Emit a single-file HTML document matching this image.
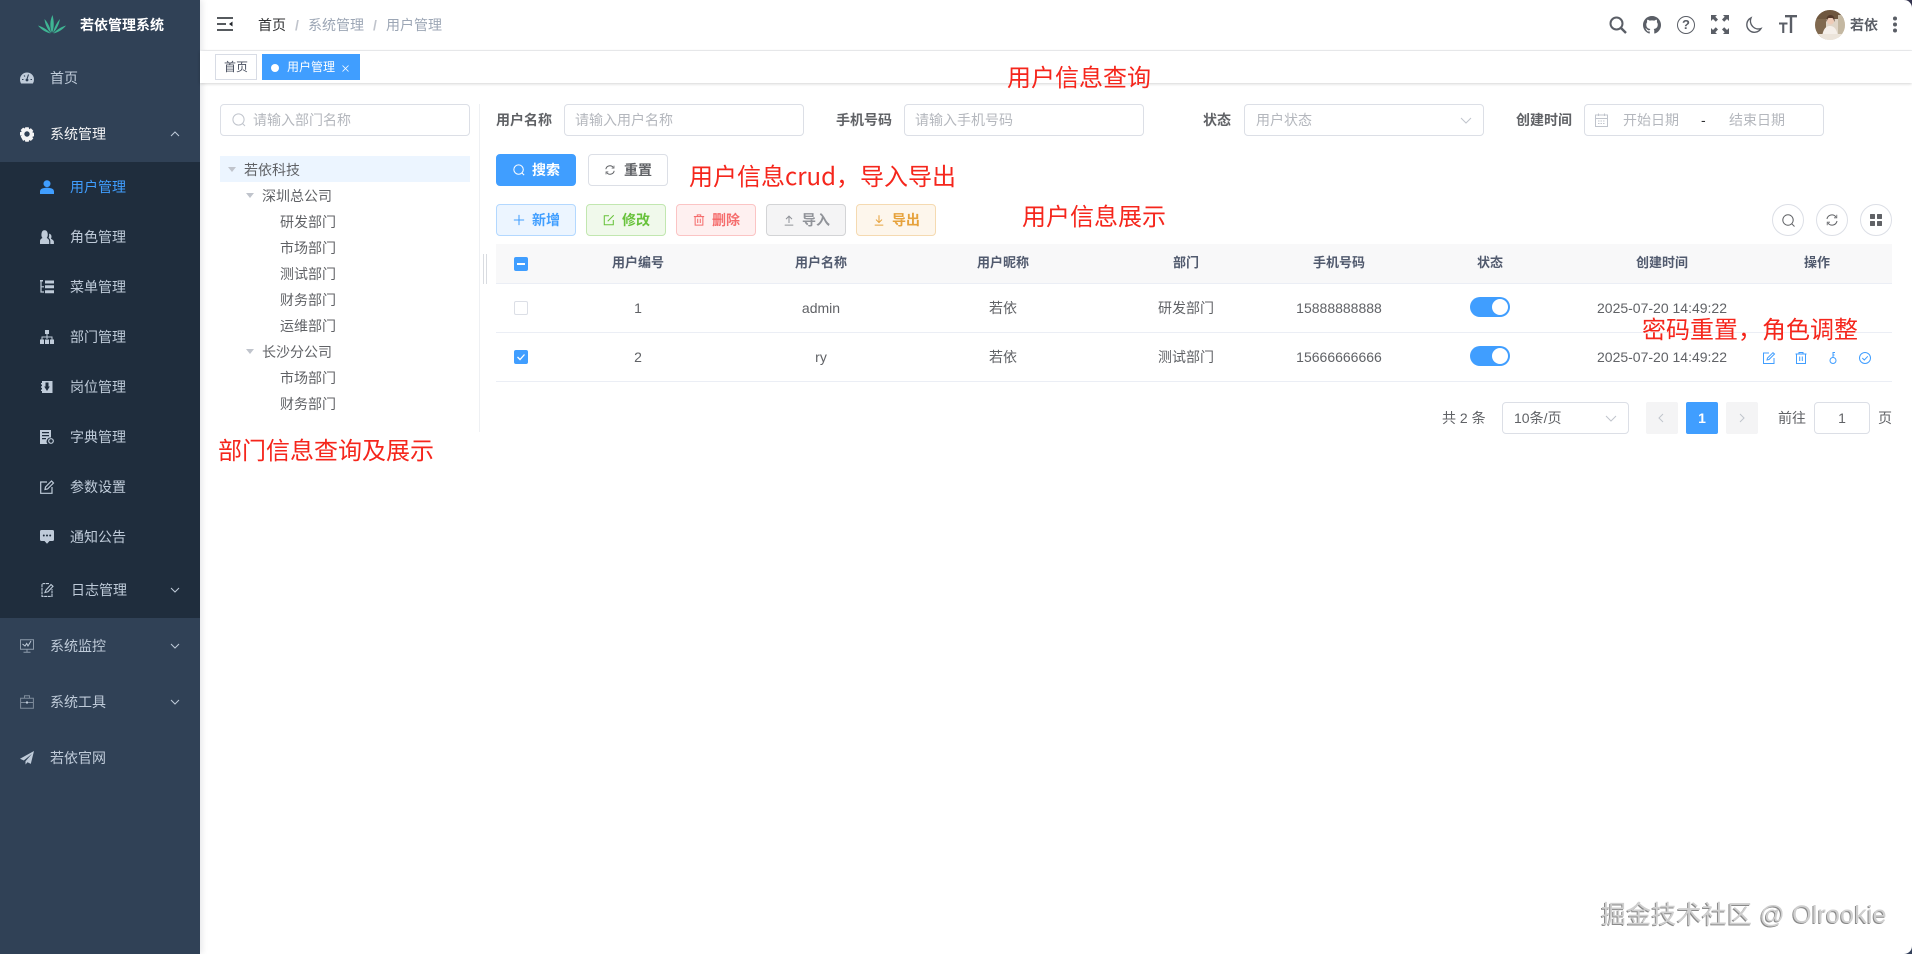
<!DOCTYPE html>
<html lang="zh-CN"><head><meta charset="utf-8"><title>用户管理</title>
<style>
*{box-sizing:border-box}
html,body{margin:0;padding:0;width:1912px;height:954px;overflow:hidden;background:#fff}
body{position:relative;font-family:"Liberation Sans","Noto Sans CJK SC",sans-serif;font-size:14px;color:#606266}
.a{position:absolute}
.t{position:absolute;white-space:nowrap;line-height:20px}
.c{position:absolute;white-space:nowrap;line-height:20px;transform:translateX(-50%)}
.b{font-weight:700}
.m{color:#bfcbd9}
svg{position:absolute;display:block;overflow:visible}
.inp{position:absolute;height:32px;border:1px solid #dcdfe6;border-radius:4px;background:#fff}
.ph{color:#b4b7bd}
.btn{position:absolute;width:80px;height:32px;border-radius:4px;border:1px solid;font-weight:700;line-height:30px}
.btn span{position:absolute;left:35px;top:0}
.btn svg{left:16px;top:9px}
.cir{position:absolute;width:32px;height:32px;border:1px solid #dcdfe6;border-radius:50%;top:204px}
.line{position:absolute;left:496px;width:1396px;height:1px;background:#ebeef5}
.red{position:absolute;white-space:nowrap;font-size:24px;line-height:32px;color:#f5261c;font-family:"Noto Sans CJK SC","Liberation Sans",sans-serif}
.sw{position:absolute;left:1470px;width:40px;height:20px;border-radius:10px;background:#409eff}
.sw i{position:absolute;right:2px;top:2px;width:16px;height:16px;border-radius:50%;background:#fff}
.pg{position:absolute;top:402px;width:32px;height:32px;border-radius:2px;background:#f4f4f5}
.tri{position:absolute;width:0;height:0;border-left:4px solid transparent;border-right:4px solid transparent;border-top:5px solid #c0c4cc}
</style></head><body>

<!-- Sidebar -->
<div class="a" style="left:0;top:0;width:200px;height:954px;background:#304156;box-shadow:2px 0 6px rgba(0,21,41,.1)"></div>
<div class="a" style="left:0;top:162px;width:200px;height:456px;background:#1f2d3d"></div>

<svg style="left:37px;top:14px" width="30" height="20" viewBox="0 0 30 20">
<g fill="#3fb594"><path d="M15 19C12.500 13 13 6 15.500 1 17 7 17.500 13 15 19Z"/><path d="M14 19C10 15 8 10 7.500 5 11 9 13.500 14 14 19Z"/><path d="M16 19C20 15 22 10 23 5 19.500 9 17 14 16 19Z"/><path d="M13.500 19.500C8 18 3.500 15 1 11.500 6 13 11 16 13.500 19.500Z"/><path d="M16.500 19.500C22 18 26.500 15 29 11.500 24 13 19 16 16.500 19.500Z"/></g></svg>
<div class="t b" style="left:80px;top:15px;color:#fff">若依管理系统</div>

<!-- 首页 -->
<svg style="left:20px;top:71px" width="14" height="14" viewBox="0 0 14 14"><path fill="#bfcbd9" d="M7 1.500A7 7 0 0 0 0 8.500c0 1.500.4 2.900 1.100 4h11.800A7 7 0 0 0 14 8.500a7 7 0 0 0-7-7Z"/><circle cx="7" cy="9" r="1.400" fill="#304156"/><path stroke="#304156" stroke-width="1.100" d="M7 8 8.500 3.500M2 8.500h1.500M10.500 8.500H12M4 4.500l1 1"/></svg>
<div class="t m" style="left:50px;top:68px">首页</div>

<!-- 系统管理 -->
<svg style="left:20px;top:127px" width="14" height="14" viewBox="0 0 14 14"><path fill="#f4f4f5" fill-rule="evenodd" d="M5.300.3h3.400l.5 1.900 1.700-.9 2.400 2.400-1 1.600 1.700.6v3.400l-1.700.6 1 1.600-2.400 2.400-1.700-.9-.5 1.700H5.300l-.5-1.700-1.700.9L.7 9.500l1-1.600L0 8.700V5.300l1.700-.7-1-1.600 2.400-2.400 1.700.9ZM7 4.300a2.700 2.700 0 1 0 0 5.400 2.700 2.700 0 0 0 0-5.400Z"/></svg>
<div class="t" style="left:50px;top:124px;color:#f4f4f5">系统管理</div>
<svg style="left:170px;top:131px" width="10" height="6" viewBox="0 0 10 6"><path d="M1 5 5 1l4 4" fill="none" stroke="#bfcbd9"/></svg>

<!-- sub items -->
<svg style="left:40px;top:180px" width="14" height="14" viewBox="0 0 14 14"><circle cx="7" cy="3.700" r="3.500" fill="#409eff"/><path fill="#409eff" d="M0 14v-2.500C0 9 3 7.800 7 7.800s7 1.200 7 3.700V14Z"/></svg>
<div class="t" style="left:70px;top:177px;color:#409eff">用户管理</div>

<svg style="left:40px;top:230px" width="14" height="14" viewBox="0 0 14 14"><g fill="#bfcbd9"><path d="M0 14v-2.500c0-2 1.200-3 2.500-3.500C1.500 6.800 1.200 5.500 1.500 3.500 2 1 3 .3 4.500.3S7.300 1 7.700 3.500c.3 2-.1 3.300-1 4.500C8 8.500 9.200 9.500 9.200 11.500V14Z"/><path d="M10.300 14v-3c0-1.300-.8-2.500-1.700-3.200.5-1 .7-2.500.4-4 1.500 0 2.500 1.200 2.500 3 0 .7-.2 1.300-.6 2 1.300.6 3 1.700 3 3V14Z"/></g></svg>
<div class="t m" style="left:70px;top:227px">角色管理</div>

<svg style="left:40px;top:280px" width="14" height="14" viewBox="0 0 14 14"><g fill="#bfcbd9"><path d="M0 0h3v1.500H0ZM5 .5h9v3H5ZM5 5.300h9v3H5ZM5 10.300h9v3H5Z"/></g><path d="M1 1.500V12h3M1 6.800h3" fill="none" stroke="#bfcbd9" stroke-width="1.200"/></svg>
<div class="t m" style="left:70px;top:277px">菜单管理</div>

<svg style="left:40px;top:330px" width="14" height="14" viewBox="0 0 14 14"><g fill="#bfcbd9"><path d="M5 0h4v4H5ZM0 9.500h4V14H0ZM5 9.500h4V14H5ZM10 9.500h4V14h-4Z"/></g><path d="M7 4v5M2 9.500V7h10v2.500" fill="none" stroke="#bfcbd9"/></svg>
<div class="t m" style="left:70px;top:327px">部门管理</div>

<svg style="left:41px;top:380px" width="12" height="14" viewBox="0 0 12 14"><path fill="#bfcbd9" fill-rule="evenodd" d="M1 1h10.500v12H1ZM4.500 2.500h3v4h1.300L6 11 3.200 6.500h1.300Z"/><path fill="#bfcbd9" d="M0 3h1v1.500H0ZM0 6.300h1v1.500H0ZM0 9.500h1V11H0Z"/></svg>
<div class="t m" style="left:70px;top:377px">岗位管理</div>

<svg style="left:40px;top:430px" width="14" height="14" viewBox="0 0 14 14"><path fill="#bfcbd9" fill-rule="evenodd" d="M0 0h11v7.500A4 4 0 0 0 7.500 14H0ZM2 2v1.200h7V2Zm0 3v1.200h7V5Zm0 3v1.200h4V8Z"/><circle cx="11" cy="11" r="2.300" fill="none" stroke="#bfcbd9" stroke-width="1.200"/></svg>
<div class="t m" style="left:70px;top:427px">字典管理</div>

<svg style="left:40px;top:480px" width="14" height="14" viewBox="0 0 14 14"><path d="M7 2H.7v11.300H12V7" fill="none" stroke="#bfcbd9" stroke-width="1.200"/><path d="M5 9.500 5.500 7l6-6L13.500 3l-6 6Z" fill="none" stroke="#bfcbd9" stroke-width="1.200"/></svg>
<div class="t m" style="left:70px;top:477px">参数设置</div>

<svg style="left:40px;top:530px" width="14" height="14" viewBox="0 0 14 14"><path fill="#bfcbd9" d="M1.500 0h11A1.500 1.500 0 0 1 14 1.500v8a1.500 1.500 0 0 1-1.500 1.500H9.500L7 13.800 4.500 11h-3A1.500 1.500 0 0 1 0 9.500v-8A1.500 1.500 0 0 1 1.500 0Z"/><g fill="#1f2d3d"><circle cx="3.800" cy="5.500" r="1"/><circle cx="7" cy="5.500" r="1"/><circle cx="10.200" cy="5.500" r="1"/></g></svg>
<div class="t m" style="left:70px;top:527px">通知公告</div>

<svg style="left:41px;top:583px" width="13" height="14" viewBox="0 0 13 14"><path d="M8 .6H2.500L1 1v12.400h10V6" fill="none" stroke="#bfcbd9" stroke-width="1.100" stroke-dasharray="3 .6"/><path d="M4 9.500 5 7l5-5.500 2 1.800L7 8.800Z" fill="none" stroke="#bfcbd9" stroke-width="1.100"/></svg>
<div class="t m" style="left:71px;top:580px">日志管理</div>
<svg style="left:170px;top:587px" width="10" height="6" viewBox="0 0 10 6"><path d="M1 1l4 4 4-4" fill="none" stroke="#bfcbd9"/></svg>

<!-- 系统监控 -->
<svg style="left:20px;top:639px" width="14" height="14" viewBox="0 0 14 14"><path d="M.5.800h13v9.400H.5ZM7 10.200v3M3.500 13.300h7" fill="none" stroke="#8e9cac"/><path d="M2.500 5 5 7l1.700-2.500L8 7l3-5" fill="none" stroke="#bfcbd9"/></svg>
<div class="t m" style="left:50px;top:636px">系统监控</div>
<svg style="left:170px;top:643px" width="10" height="6" viewBox="0 0 10 6"><path d="M1 1l4 4 4-4" fill="none" stroke="#bfcbd9"/></svg>

<!-- 系统工具 -->
<svg style="left:20px;top:695px" width="14" height="14" viewBox="0 0 14 14"><path d="M.6 3.300h12.800v10H.6ZM4.500 3.300V.8h5v2.500M.6 7.500h12.800" fill="none" stroke="#7e8c9c"/><path d="M6 6.500h2v2H6Z" fill="#bfcbd9"/></svg>
<div class="t m" style="left:50px;top:692px">系统工具</div>
<svg style="left:170px;top:699px" width="10" height="6" viewBox="0 0 10 6"><path d="M1 1l4 4 4-4" fill="none" stroke="#bfcbd9"/></svg>

<!-- 若依官网 -->
<svg style="left:20px;top:751px" width="14" height="14" viewBox="0 0 14 14"><path fill="#bfcbd9" d="M14 0 0 7.800l3.800 1.700L12 2.800 5.500 10.300v3.200l2-2.300 3.300 1.700Z"/></svg>
<div class="t m" style="left:50px;top:748px">若依官网</div>

<!-- Navbar -->
<div class="a" style="left:200px;top:50px;width:1712px;height:1px;background:#f0f1f3"></div>
<svg style="left:217px;top:17px" width="16" height="14" viewBox="0 0 16 14"><path d="M0 1h16M0 7h9M0 13h16" stroke="#1f2329" stroke-width="1.500" fill="none"/><path d="M15.500 4.500v5L12 7Z" fill="#1f2329"/></svg>
<div class="t" style="left:258px;top:15px;color:#303133">首页</div>
<div class="t" style="left:295px;top:15px;color:#c0c4cc;font-weight:700">/</div>
<div class="t" style="left:308px;top:15px;color:#9ca6b5">系统管理</div>
<div class="t" style="left:373px;top:15px;color:#c0c4cc;font-weight:700">/</div>
<div class="t" style="left:386px;top:15px;color:#9ca6b5">用户管理</div>

<svg style="left:1609px;top:16px" width="18" height="18" viewBox="0 0 18 18"><circle cx="7.500" cy="7.500" r="6" fill="none" stroke="#5a5e66" stroke-width="2"/><path d="M12 12l5 5" stroke="#5a5e66" stroke-width="2.400"/></svg>
<svg style="left:1643px;top:16px" width="18" height="18" viewBox="0 0 16 16"><path fill="#5a5e66" d="M8 0C3.580 0 0 3.580 0 8c0 3.540 2.290 6.530 5.470 7.590.4.070.55-.17.55-.38 0-.19-.01-.82-.01-1.490-2.010.37-2.530-.49-2.690-.94-.09-.23-.48-.94-.82-1.130-.28-.15-.68-.52-.01-.53.630-.01 1.080.58 1.230.82.72 1.210 1.870.87 2.330.66.070-.52.280-.87.510-1.070-1.780-.2-3.640-.89-3.640-3.950 0-.87.310-1.590.82-2.150-.08-.2-.36-1.020.08-2.120 0 0 .67-.21 2.200.82.640-.18 1.320-.27 2-.27s1.360.09 2 .27c1.530-1.040 2.200-.82 2.200-.82.44 1.100.16 1.920.08 2.120.51.560.82 1.270.82 2.150 0 3.070-1.870 3.750-3.650 3.950.29.250.54.730.54 1.480 0 1.070-.01 1.930-.01 2.200 0 .21.150.46.550.38A8.010 8.010 0 0 0 16 8c0-4.420-3.580-8-8-8Z"/></svg>
<div class="a" style="left:1677px;top:16px;width:18px;height:18px;border:1.500px solid #5a5e66;border-radius:50%;text-align:center;font-size:13px;font-weight:700;line-height:15px;color:#5a5e66">?</div>
<svg style="left:1711px;top:15px" width="18" height="19" viewBox="0 0 18 19"><g fill="#5a5e66"><path d="M0 0h6L4.300 1.800 7 4.500 4.800 6.700 2 4 0 6ZM18 0h-6l1.700 1.800L11 4.500l2.200 2.200L16 4l2 2ZM0 19h6l-1.700-1.800L7 14.500l-2.200-2.200L2 15l-2-2ZM18 19h-6l1.700-1.800L11 14.500l2.200-2.200L16 15l2-2Z"/></g></svg>
<svg style="left:1745px;top:17px" width="17" height="17" viewBox="0 0 17 17"><path d="M6 .9A7.600 7.600 0 1 0 16 11.500 8 8 0 0 1 6 .9Z" fill="none" stroke="#5a5e66" stroke-width="1.400"/></svg>
<svg style="left:1779px;top:15px" width="18" height="19" viewBox="0 0 18 19"><path d="M6 0h12v2.400h-4.800V18h-2.400V2.400H6ZM0 7.500h8.500v2H5.300V18H3.200V9.500H0Z" fill="#5a5e66"/></svg>

<svg style="left:1815px;top:10px" width="30" height="30" viewBox="0 0 30 30">
<defs><clipPath id="cp"><circle cx="15" cy="15" r="15"/></clipPath></defs>
<g clip-path="url(#cp)"><rect width="30" height="30" fill="#e0d6c8"/><rect width="11" height="30" fill="#80694f"/><rect x="0" y="0" width="30" height="9" fill="#6f573f"/><rect x="23" y="5" width="7" height="25" fill="#c4b8a2"/><path d="M7 30c0-9 3-14 8-14s8 5 8 14Z" fill="#f5efe9"/><circle cx="15.500" cy="11" r="3.500" fill="#eeccb8"/><path d="M11.500 12c-.5-5 1.500-7 4-7s4.500 2 4 7l-1.500-4h-5Z" fill="#54392a"/><rect y="24" width="30" height="6" fill="#ece4da"/></g></svg>
<div class="t b" style="left:1850px;top:15px;color:#5a5e66">若依</div>
<svg style="left:1892px;top:16px" width="6" height="17" viewBox="0 0 6 17"><g fill="#5a5e66"><circle cx="3" cy="2.500" r="2"/><circle cx="3" cy="8.500" r="2"/><circle cx="3" cy="14.500" r="2"/></g></svg>

<!-- Tags -->
<div class="a" style="left:200px;top:51px;width:1712px;height:32px;background:#fff;box-shadow:0 1px 3px 0 rgba(0,0,0,.15),0 0 3px 0 rgba(0,0,0,.04)"></div>
<div class="a" style="left:215px;top:54px;width:42px;height:26px;border:1px solid #d8dce5;background:#fff;color:#495060;font-size:12px;line-height:24px;text-align:center">首页</div>
<div class="a" style="left:262px;top:54px;width:98px;height:26px;background:#409eff"></div>
<div class="a" style="left:271px;top:64px;width:8px;height:8px;border-radius:50%;background:#fff"></div>
<div class="t" style="left:287px;top:57px;color:#fff;font-size:12px">用户管理</div>
<svg style="left:342px;top:65px" width="7" height="7" viewBox="0 0 7 7"><path d="M.5.500l6 6M6.500.500l-6 6" stroke="#fff" stroke-width=".8"/></svg>

<!-- Left tree -->
<div class="a" style="left:479px;top:104px;width:1px;height:328px;background:#eef0f3"></div>
<div class="a" style="left:483px;top:254px;width:1px;height:30px;background:#d9dce1"></div>
<div class="a" style="left:486px;top:254px;width:1px;height:30px;background:#d9dce1"></div>
<div class="inp" style="left:220px;top:104px;width:250px"></div>
<svg style="left:232px;top:113px" width="14" height="14" viewBox="0 0 14 14"><circle cx="6.500" cy="6.500" r="5.600" fill="none" stroke="#c0c4cc"/><path d="M10.500 10.500l2.500 2.500" stroke="#c0c4cc"/></svg>
<div class="t ph" style="left:253px;top:110px">请输入部门名称</div>

<div class="a" style="left:220px;top:156px;width:250px;height:26px;background:#ecf5ff"></div>
<div class="tri" style="left:228px;top:167px"></div>
<div class="t" style="left:244px;top:160px">若依科技</div>
<div class="tri" style="left:246px;top:193px"></div>
<div class="t" style="left:262px;top:186px">深圳总公司</div>
<div class="t" style="left:280px;top:212px">研发部门</div>
<div class="t" style="left:280px;top:238px">市场部门</div>
<div class="t" style="left:280px;top:264px">测试部门</div>
<div class="t" style="left:280px;top:290px">财务部门</div>
<div class="t" style="left:280px;top:316px">运维部门</div>
<div class="tri" style="left:246px;top:349px"></div>
<div class="t" style="left:262px;top:342px">长沙分公司</div>
<div class="t" style="left:280px;top:368px">市场部门</div>
<div class="t" style="left:280px;top:394px">财务部门</div>

<!-- Form -->
<div class="t b" style="left:496px;top:110px">用户名称</div>
<div class="inp" style="left:564px;top:104px;width:240px"></div>
<div class="t ph" style="left:575px;top:110px">请输入用户名称</div>
<div class="t b" style="left:836px;top:110px">手机号码</div>
<div class="inp" style="left:904px;top:104px;width:240px"></div>
<div class="t ph" style="left:915px;top:110px">请输入手机号码</div>
<div class="t b" style="left:1203px;top:110px">状态</div>
<div class="inp" style="left:1244px;top:104px;width:240px"></div>
<div class="t ph" style="left:1256px;top:110px">用户状态</div>
<svg style="left:1460px;top:117px" width="12" height="7" viewBox="0 0 12 7"><path d="M1 1l5 5 5-5" fill="none" stroke="#c0c4cc"/></svg>
<div class="t b" style="left:1516px;top:110px">创建时间</div>
<div class="inp" style="left:1584px;top:104px;width:240px"></div>
<svg style="left:1595px;top:113px" width="13" height="14" viewBox="0 0 13 14"><path d="M.5 2h12v11.500H.5ZM.5 5.500h12M3.500 .5V3M9.500 .5V3" fill="none" stroke="#c0c4cc"/><path d="M3 8h7M3 10.500h7" stroke="#c0c4cc" stroke-dasharray="1.500 1"/></svg>
<div class="t ph" style="left:1623px;top:110px">开始日期</div>
<div class="t" style="left:1701px;top:110px;color:#303133">-</div>
<div class="t ph" style="left:1729px;top:110px">结束日期</div>

<!-- search buttons -->
<div class="btn" style="left:496px;top:154px;background:#409eff;border-color:#409eff;color:#fff"><svg width="12" height="12" viewBox="0 0 14 14"><circle cx="6.500" cy="6.500" r="5.500" fill="none" stroke="#fff" stroke-width="1.200"/><path d="M10.500 10.500 13 13" stroke="#fff" stroke-width="1.200"/></svg><span>搜索</span></div>
<div class="btn" style="left:588px;top:154px;background:#fff;border-color:#dcdfe6;color:#606266"><svg style="left:16px;top:10px" width="10" height="10" viewBox="0 0 12 12"><path d="M1 5A5 5 0 0 1 10 3M11 7a5 5 0 0 1-9 2" fill="none" stroke="#606266" stroke-width="1.200"/><path d="M10.800.8v3H8M1.200 11.200v-3H4" fill="none" stroke="#606266" stroke-width=".9"/></svg><span>重置</span></div>

<!-- toolbar -->
<div class="btn" style="left:496px;top:204px;background:#ecf5ff;border-color:#b3d8ff;color:#409eff"><svg width="12" height="12" viewBox="0 0 14 14"><path d="M7 1v12M1 7h12" stroke="#409eff" stroke-width="1.200"/></svg><span>新增</span></div>
<div class="btn" style="left:586px;top:204px;background:#f0f9eb;border-color:#c2e7b0;color:#67c23a"><svg width="12" height="12" viewBox="0 0 14 14"><path d="M7 2H1.500v10.500H12V7M5.500 8.500 12.500 1.500" fill="none" stroke="#67c23a" stroke-width="1.200"/></svg><span>修改</span></div>
<div class="btn" style="left:676px;top:204px;background:#fef0f0;border-color:#fbc4c4;color:#f56c6c"><svg width="12" height="12" viewBox="0 0 14 14"><path d="M1 3h12M2.500 3v10h9V3M5 3V1h4v2M5.500 5.500v5M8.500 5.500v5" fill="none" stroke="#f56c6c" stroke-width="1.200"/></svg><span>删除</span></div>
<div class="btn" style="left:766px;top:204px;background:#f4f4f5;border-color:#d3d4d6;color:#909399"><svg width="12" height="12" viewBox="0 0 14 14"><path d="M2 13h10M7 10.500V2.500M3.500 6 7 2.500 10.500 6" fill="none" stroke="#909399" stroke-width="1.200"/></svg><span>导入</span></div>
<div class="btn" style="left:856px;top:204px;background:#fdf6ec;border-color:#f5dab1;color:#e6a23c"><svg width="12" height="12" viewBox="0 0 14 14"><path d="M2 13h10M7 1.500v8.500M3.500 6.500 7 10l3.500-3.500" fill="none" stroke="#e6a23c" stroke-width="1.200"/></svg><span>导出</span></div>

<div class="cir" style="left:1772px"></div>
<svg style="left:1782px;top:214px" width="13" height="13" viewBox="0 0 13 13"><circle cx="6" cy="6" r="5.200" fill="none" stroke="#606266"/><path d="M9.800 9.800 12.500 12.500" stroke="#606266"/></svg>
<div class="cir" style="left:1816px"></div>
<svg style="left:1826px;top:214px" width="12" height="12" viewBox="0 0 12 12"><path d="M1 5A5 5 0 0 1 10 3M11 7a5 5 0 0 1-9 2" fill="none" stroke="#606266"/><path d="M10.800.8v3H8M1.200 11.200v-3H4" fill="none" stroke="#606266" stroke-width=".8"/></svg>
<div class="cir" style="left:1860px"></div>
<svg style="left:1870px;top:214px" width="12" height="12" viewBox="0 0 12 12"><g fill="#606266"><rect width="5" height="5" rx=".6"/><rect x="7" width="5" height="5" rx=".6"/><rect y="7" width="5" height="5" rx=".6"/><rect x="7" y="7" width="5" height="5" rx=".6"/></g></svg>

<!-- Table -->
<div class="a" style="left:496px;top:244px;width:1396px;height:39px;background:#f8f8f9"></div>
<div class="line" style="top:283px"></div>
<div class="line" style="top:332px"></div>
<div class="line" style="top:381px"></div>

<div class="a" style="left:514px;top:257px;width:14px;height:14px;border-radius:2px;background:#409eff"></div>
<div class="a" style="left:517px;top:263px;width:8px;height:2px;background:#fff"></div>
<div class="c b" style="left:638px;top:253px;font-size:13px;color:#515a6e">用户编号</div>
<div class="c b" style="left:821px;top:253px;font-size:13px;color:#515a6e">用户名称</div>
<div class="c b" style="left:1003px;top:253px;font-size:13px;color:#515a6e">用户昵称</div>
<div class="c b" style="left:1186px;top:253px;font-size:13px;color:#515a6e">部门</div>
<div class="c b" style="left:1339px;top:253px;font-size:13px;color:#515a6e">手机号码</div>
<div class="c b" style="left:1490px;top:253px;font-size:13px;color:#515a6e">状态</div>
<div class="c b" style="left:1662px;top:253px;font-size:13px;color:#515a6e">创建时间</div>
<div class="c b" style="left:1817px;top:253px;font-size:13px;color:#515a6e">操作</div>

<div class="a" style="left:514px;top:301px;width:14px;height:14px;border:1px solid #dcdfe6;border-radius:2px;background:#fff"></div>
<div class="c" style="left:638px;top:298px">1</div>
<div class="c" style="left:821px;top:298px">admin</div>
<div class="c" style="left:1003px;top:298px">若依</div>
<div class="c" style="left:1186px;top:298px">研发部门</div>
<div class="c" style="left:1339px;top:298px">15888888888</div>
<div class="sw" style="top:297px"><i></i></div>
<div class="c" style="left:1662px;top:298px">2025-07-20 14:49:22</div>

<div class="a" style="left:514px;top:350px;width:14px;height:14px;border-radius:2px;background:#409eff"></div>
<svg style="left:514px;top:350px" width="14" height="14" viewBox="0 0 14 14"><path d="M3.500 7 6 9.500 10.500 4.500" fill="none" stroke="#fff" stroke-width="1.300"/></svg>
<div class="c" style="left:638px;top:347px">2</div>
<div class="c" style="left:821px;top:347px">ry</div>
<div class="c" style="left:1003px;top:347px">若依</div>
<div class="c" style="left:1186px;top:347px">测试部门</div>
<div class="c" style="left:1339px;top:347px">15666666666</div>
<div class="sw" style="top:346px"><i></i></div>
<div class="c" style="left:1662px;top:347px">2025-07-20 14:49:22</div>

<svg style="left:1763px;top:352px" width="12" height="12" viewBox="0 0 12 12"><path d="M6 1H.5v10.500H11V6M4 8l.5-2L10 .7 11.500 2 6 7.500Z" fill="none" stroke="#409eff"/></svg>
<svg style="left:1795px;top:352px" width="12" height="12" viewBox="0 0 12 12"><path d="M.5 2h11M1.500 2v9.500h9V2M4 2V.5h4V2M4.700 4.500v4.500M7.300 4.500v4.500" fill="none" stroke="#409eff"/></svg>
<svg style="left:1828px;top:352px" width="10" height="12" viewBox="0 0 10 12"><circle cx="5" cy="8.500" r="3" fill="none" stroke="#409eff"/><path d="M5 5.500V.5h2M5 3h1.500" fill="none" stroke="#409eff"/></svg>
<svg style="left:1859px;top:352px" width="12" height="12" viewBox="0 0 12 12"><circle cx="6" cy="6" r="5.500" fill="none" stroke="#409eff"/><path d="M3.300 6 5.300 8 8.800 4.300" fill="none" stroke="#409eff"/></svg>

<!-- Pagination -->
<div class="t" style="left:1442px;top:408px">共 2 条</div>
<div class="inp" style="left:1502px;top:402px;width:127px"></div>
<div class="t" style="left:1514px;top:408px">10条/页</div>
<svg style="left:1605px;top:415px" width="12" height="7" viewBox="0 0 12 7"><path d="M1 1l5 5 5-5" fill="none" stroke="#c0c4cc"/></svg>
<div class="pg" style="left:1646px"></div>
<svg style="left:1658px;top:413px" width="6" height="10" viewBox="0 0 6 10"><path d="M5 1 1 5l4 4" fill="none" stroke="#c0c4cc"/></svg>
<div class="pg b" style="left:1686px;background:#409eff;color:#fff;text-align:center;line-height:32px">1</div>
<div class="pg" style="left:1726px"></div>
<svg style="left:1739px;top:413px" width="6" height="10" viewBox="0 0 6 10"><path d="M1 1l4 4-4 4" fill="none" stroke="#c0c4cc"/></svg>
<div class="t" style="left:1778px;top:408px">前往</div>
<div class="inp" style="left:1814px;top:402px;width:56px;text-align:center;line-height:30px">1</div>
<div class="t" style="left:1878px;top:408px">页</div>

<!-- Annotations -->
<div class="red" style="left:1007px;top:60px">用户信息查询</div>
<div class="red" style="left:689px;top:159px">用户信息crud，导入导出</div>
<div class="red" style="left:1022px;top:199px">用户信息展示</div>
<div class="red" style="left:218px;top:433px">部门信息查询及展示</div>
<div class="red" style="left:1642px;top:312px">密码重置，角色调整</div>

<!-- Watermark -->
<div class="t" style="left:1601px;top:899px;font-size:25px;line-height:32px;letter-spacing:.2px;color:#cfcfcf;text-shadow:-1px 1px 0 #8a8a8a">掘金技术社区 @ Olrookie</div>

<!-- window corners -->
<svg style="left:1904px;top:0" width="8" height="8" viewBox="0 0 8 8"><path d="M0 0h8v8A8 8 0 0 0 0 0Z" fill="#34344f"/></svg>
<svg style="left:1904px;top:946px" width="8" height="8" viewBox="0 0 8 8"><path d="M8 0v8H0A8 8 0 0 0 8 0Z" fill="#34405a"/></svg>
</body></html>
